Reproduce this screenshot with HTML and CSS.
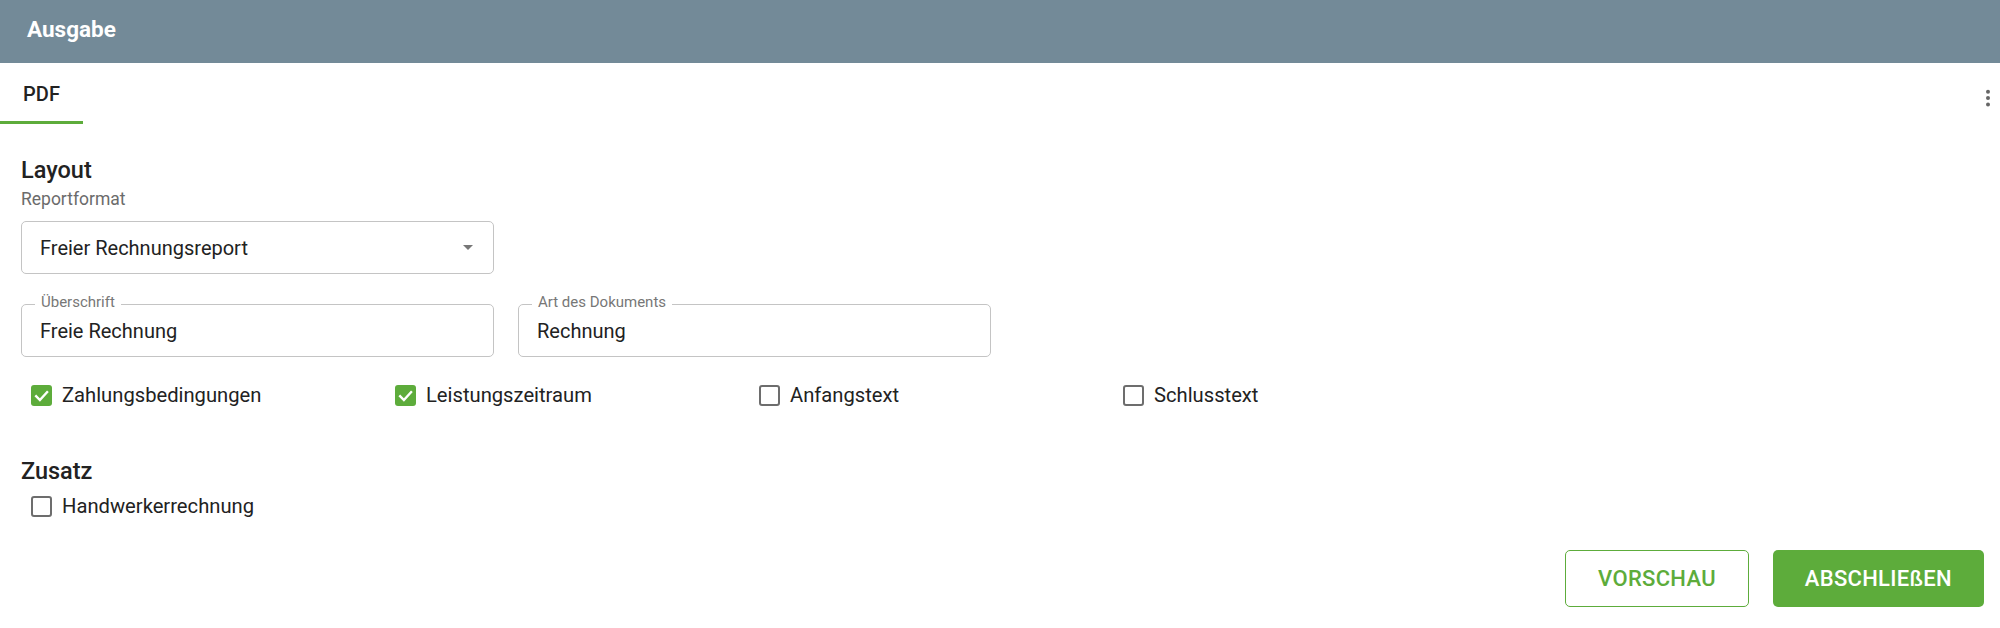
FILE: index.html
```html
<!DOCTYPE html>
<html>
  <head>
    <title>Ausgabe</title>
    <link rel="stylesheet" href="styles.css">
  </head>
  <body>
    <header class="appbar">Ausgabe</header>
    <nav class="tabs">
      <div class="tab active">PDF</div>
      <button class="more" aria-label="Mehr">
        <svg viewBox="0 0 24 24">
          <circle cx="12" cy="5.8" r="2" />
          <circle cx="12" cy="12.1" r="2" />
          <circle cx="12" cy="18.4" r="2" />
        </svg>
      </button>
    </nav>

    <main class="content">
      <h2 class="section-title">Layout</h2>
      <p class="hint">Reportformat</p>
      <div class="select">
        <span>Freier Rechnungsreport</span>
        <svg class="arrow" viewBox="0 0 10 5"><path d="M0 0h10L5 5z" /></svg>
      </div>

      <div class="field-row">
        <div class="field">
          <span class="field-label">Überschrift</span>
          <span>Freie Rechnung</span>
        </div>
        <div class="field">
          <span class="field-label">Art des Dokuments</span>
          <span>Rechnung</span>
        </div>
      </div>

      <div class="checks">
        <label class="check">
          <span class="box checked">
            <svg viewBox="0 0 21 21"><path d="M4.3 10.4l4.6 4.6 8-8.8" /></svg>
          </span>
          Zahlungsbedingungen
        </label>
        <label class="check">
          <span class="box checked">
            <svg viewBox="0 0 21 21"><path d="M4.3 10.4l4.6 4.6 8-8.8" /></svg>
          </span>
          Leistungszeitraum
        </label>
        <label class="check">
          <span class="box"></span>
          Anfangstext
        </label>
        <label class="check">
          <span class="box"></span>
          Schlusstext
        </label>
      </div>

      <h2 class="section-title zusatz">Zusatz</h2>
      <div class="checks single">
        <label class="check">
          <span class="box"></span>
          Handwerkerrechnung
        </label>
      </div>

      <div class="actions">
        <button class="btn btn-outline">VORSCHAU</button>
        <button class="btn btn-primary">ABSCHLIEßEN</button>
      </div>
    </main>
  </body>
</html>
```

FILE: styles.css
```css
* {
  margin: 0;
  padding: 0;
  box-sizing: border-box;
}

body {
  font-family: Roboto, "Liberation Sans", sans-serif;
  color: #222;
  background-color: #fff;
}

.appbar {
  height: 63px;
  display: flex;
  align-items: center;
  padding-left: 27px;
  padding-bottom: 6px;
  background-color: #738a98;
  color: #fff;
  font-size: 22.5px;
  font-weight: 700;
}

.tabs {
  height: 61px;
  display: flex;
  justify-content: space-between;
}

.tab {
  width: 83px;
  display: flex;
  justify-content: center;
  align-items: center;
  font-size: 20px;
  font-weight: 500;
  color: #222;
}

.tab.active {
  box-shadow: inset 0 -3px 0 #5dac3b;
}

.more {
  width: 24px;
  height: 24px;
  margin-top: 23px;
  border: none;
  background: none;
}

.more svg {
  width: 24px;
  height: 24px;
  fill: #666;
}

.content {
  padding: 0 16px 0 21px;
}

.section-title {
  margin-top: 31px;
  font-size: 23.5px;
  line-height: 30px;
  font-weight: 500;
  color: #222;
}

.section-title.zusatz {
  margin-top: 46px;
}

.hint {
  margin-top: 3px;
  font-size: 17.5px;
  line-height: 22px;
  color: #6b6b6b;
}

.select,
.field {
  position: relative;
  width: 473px;
  height: 53px;
  display: flex;
  align-items: center;
  padding-left: 18px;
  border: 1px solid #c4c4c4;
  border-radius: 5px;
  font-size: 20px;
}

.select {
  margin-top: 11px;
  justify-content: space-between;
  padding-right: 20px;
}

.arrow {
  width: 10px;
  height: 5px;
  fill: #777;
}

.field-row {
  display: flex;
  gap: 24px;
  margin-top: 30px;
}

.field-label {
  position: absolute;
  top: -12px;
  left: 13px;
  padding: 0 6px;
  background-color: #fff;
  font-size: 15px;
  line-height: 18px;
  color: #777;
}

.checks {
  display: grid;
  grid-template-columns: repeat(4, 364px);
  margin-top: 23px;
  padding-left: 10px;
}

.checks.single {
  margin-top: 5px;
}

.check {
  height: 30px;
  display: flex;
  align-items: center;
  gap: 10px;
  font-size: 20.2px;
}

.box {
  width: 21px;
  height: 21px;
  border: 2px solid #6d6d6d;
  border-radius: 3px;
}

.box.checked {
  border: none;
  background-color: #5dac3b;
}

.box svg {
  width: 21px;
  height: 21px;
  fill: none;
  stroke: #fff;
  stroke-width: 2.4;
}

.actions {
  display: flex;
  justify-content: flex-end;
  gap: 24px;
  margin-top: 29px;
}

.btn {
  height: 57px;
  padding: 0 32px;
  border-radius: 5px;
  font-family: Roboto, "Liberation Sans", sans-serif;
  font-size: 22px;
  font-weight: 500;
  letter-spacing: 0.3px;
}

.btn-outline {
  border: 1px solid #5dac3b;
  background-color: #fff;
  color: #5dac3b;
}

.btn-primary {
  border: none;
  background-color: #5dac3b;
  color: #fff;
}
```
